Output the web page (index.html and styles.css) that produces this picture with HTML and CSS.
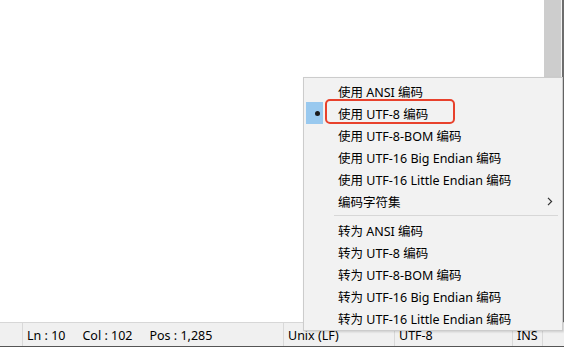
FILE: index.html
```html
<!DOCTYPE html>
<html>
<head>
<meta charset="utf-8">
<link rel="stylesheet" href="styles.css">
</head>
<body>
<div class="app">
  <div class="editor">
    <div class="content"></div>
    <div class="scrollbar"></div>
    <div class="edge"></div>
  </div>
  <div class="status">
    <div class="cell c1"></div>
    <div class="cell c2"><span>Ln : 10</span><span>Col : 102</span><span>Pos : 1,285</span></div>
    <div class="cell c3">Unix (LF)</div>
    <div class="cell c4">UTF-8</div>
    <div class="cell c5">INS</div>
    <div class="cell c6"></div>
  </div>
</div>

<div class="menu">
  <div class="item"><span class="check"></span><span class="label">使用 ANSI 编码</span></div>
  <div class="item"><span class="check on"><span class="dot"></span></span><span class="label">使用 UTF-8 编码</span></div>
  <div class="item"><span class="check"></span><span class="label">使用 UTF-8-BOM 编码</span></div>
  <div class="item"><span class="check"></span><span class="label">使用 UTF-16 Big Endian 编码</span></div>
  <div class="item"><span class="check"></span><span class="label">使用 UTF-16 Little Endian 编码</span></div>
  <div class="item"><span class="check"></span><span class="label">编码字符集</span><span class="arrow"><svg width="6" height="9" viewBox="0 0 6 9"><path d="M1 0.8 L4.6 4.5 L1 8.2" fill="none" stroke="#333" stroke-width="1.2"/></svg></span></div>
  <div class="sep"></div>
  <div class="item"><span class="check"></span><span class="label">转为 ANSI 编码</span></div>
  <div class="item"><span class="check"></span><span class="label">转为 UTF-8 编码</span></div>
  <div class="item"><span class="check"></span><span class="label">转为 UTF-8-BOM 编码</span></div>
  <div class="item"><span class="check"></span><span class="label">转为 UTF-16 Big Endian 编码</span></div>
  <div class="item"><span class="check"></span><span class="label">转为 UTF-16 Little Endian 编码</span></div>
</div>

<div class="annot"></div>
</body>
</html>
```

FILE: styles.css
```css
html, body {
  margin: 0;
  padding: 0;
}
body {
  width: 564px;
  height: 347px;
  overflow: hidden;
  position: relative;
  font-family: "Noto Sans", "Noto Sans CJK SC", sans-serif;
  font-size: 12.5px;
  color: #000;
}
.app {
  display: flex;
  flex-direction: column;
  height: 347px;
}
.editor {
  flex: 1;
  display: flex;
  background: #fff;
}
.content {
  flex: 1;
  background: #fff;
}
.scrollbar {
  width: 17px;
  background: #cdcdcd;
  border-right: 1px solid #f4f4f4;
}
.edge {
  width: 2px;
  background: #6d6d6d;
}
.status {
  display: flex;
  background: #f0f0f0;
  border-top: 1px solid #d7d7d7;
  border-bottom: 1px solid #555;
  box-sizing: border-box;
  height: 25px;
  align-items: stretch;
}
.cell {
  display: flex;
  align-items: center;
  border-right: 1px solid #d9d9d9;
  box-sizing: border-box;
  padding-left: 4px;
  padding-top: 1px;
  white-space: nowrap;
}
.c1 { width: 23px; padding: 0; }
.c2 { width: 261px; gap: 17px; }
.c3 { width: 111px; }
.c4 { width: 118px; }
.c5 { width: 30px; }
.c6 { flex: 1; border-right: none; }

.menu {
  position: absolute;
  left: 303px;
  top: 77px;
  width: 260px;
  box-sizing: border-box;
  background: #f2f2f2;
  border: 1px solid #cccccc;
  padding: 2px 0 0 0;
  box-shadow: 1px 1px 2px rgba(0,0,0,0.15);
  height: 254px;
}
.item {
  height: 22px;
  display: flex;
  align-items: center;
  position: relative;
}
.check {
  width: 17px;
  height: 22px;
  margin-left: 2px;
  margin-right: 15px;
  display: flex;
  align-items: center;
  justify-content: center;
}
.check.on {
  background: #99c9ef;
}
.dot {
  width: 5px;
  height: 5px;
  border-radius: 50%;
  background: #1a1a1a;
  margin-left: 6px;
}
.label {
  flex: 1;
  white-space: nowrap;
}
.arrow {
  width: 6px;
  margin-right: 9px;
  display: flex;
  align-items: center;
}
.sep {
  height: 1px;
  background: #d7d7d7;
  margin: 3px 4px 3px 30px;
}

.annot {
  position: absolute;
  left: 325px;
  top: 99px;
  width: 130px;
  height: 25px;
  box-sizing: border-box;
  border: 2px solid #e8412c;
  border-radius: 5px;
}
```
